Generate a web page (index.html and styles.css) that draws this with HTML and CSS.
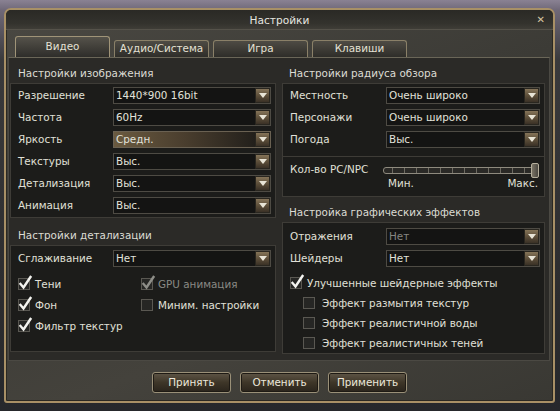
FILE: index.html
```html
<!DOCTYPE html>
<html lang="ru">
<head>
<meta charset="utf-8">
<title>Настройки</title>
<link rel="stylesheet" href="styles.css">
</head>
<body>
<div class="window">
  <div class="titlebar">
    <span></span>
    <span class="title">Настройки</span>
    <span class="close">✕</span>
  </div>
  <div class="tabs">
    <div class="tab active">Видео</div>
    <div class="tab">Аудио/Система</div>
    <div class="tab">Игра</div>
    <div class="tab">Клавиши</div>
  </div>
  <div class="panel">
    <div class="col col-left">
      <div class="head">Настройки изображения</div>
      <div class="box box-img">
        <div class="row"><span class="lbl">Разрешение</span><div class="select"><span class="val">1440*900 16bit</span><span class="arrow"></span></div></div>
        <div class="row"><span class="lbl">Частота</span><div class="select"><span class="val">60Hz</span><span class="arrow"></span></div></div>
        <div class="row"><span class="lbl">Яркость</span><div class="select hot"><span class="val">Средн.</span><span class="arrow"></span></div></div>
        <div class="row"><span class="lbl">Текстуры</span><div class="select"><span class="val">Выс.</span><span class="arrow"></span></div></div>
        <div class="row"><span class="lbl">Детализация</span><div class="select"><span class="val">Выс.</span><span class="arrow"></span></div></div>
        <div class="row"><span class="lbl">Анимация</span><div class="select"><span class="val">Выс.</span><span class="arrow"></span></div></div>
      </div>
      <div class="head head2">Настройки детализации</div>
      <div class="box box-det">
        <div class="row"><span class="lbl">Сглаживание</span><div class="select"><span class="val">Нет</span><span class="arrow"></span></div></div>
        <div class="checks">
          <label class="chk on"><span class="cb"><svg viewBox="0 0 14 14"><rect x="0.5" y="2.5" width="11" height="11"/><path d="M2.5 8 L5.5 11.5 L12.5 1"/></svg></span>Тени</label>
          <label class="chk on disabled"><span class="cb"><svg viewBox="0 0 14 14"><rect x="0.5" y="2.5" width="11" height="11"/><path d="M2.5 8 L5.5 11.5 L12.5 1"/></svg></span>GPU анимация</label>
          <label class="chk on"><span class="cb"><svg viewBox="0 0 14 14"><rect x="0.5" y="2.5" width="11" height="11"/><path d="M2.5 8 L5.5 11.5 L12.5 1"/></svg></span>Фон</label>
          <label class="chk"><span class="cb"><svg viewBox="0 0 14 14"><rect x="0.5" y="2.5" width="11" height="11"/></svg></span>Миним. настройки</label>
          <label class="chk on"><span class="cb"><svg viewBox="0 0 14 14"><rect x="0.5" y="2.5" width="11" height="11"/><path d="M2.5 8 L5.5 11.5 L12.5 1"/></svg></span>Фильтр текстур</label>
        </div>
      </div>
    </div>
    <div class="col col-right">
      <div class="head">Настройки радиуса обзора</div>
      <div class="box box-view">
        <div class="row"><span class="lbl">Местность</span><div class="select"><span class="val">Очень широко</span><span class="arrow"></span></div></div>
        <div class="row"><span class="lbl">Персонажи</span><div class="select"><span class="val">Очень широко</span><span class="arrow"></span></div></div>
        <div class="row"><span class="lbl">Погода</span><div class="select"><span class="val">Выс.</span><span class="arrow"></span></div></div>
        <div class="sep"></div>
        <div class="slider-row">
          <span class="lbl">Кол-во PC/NPC</span>
          <div class="slider">
            <div class="track"><i></i><i></i><i></i><i></i><i></i><i></i><i></i><i></i><i></i><i></i><i></i><i></i><span class="knob"></span></div>
            <div class="ends"><span>Мин.</span><span>Макс.</span></div>
          </div>
        </div>
      </div>
      <div class="head head3">Настройка графических эффектов</div>
      <div class="box box-fx">
        <div class="row"><span class="lbl">Отражения</span><div class="select off"><span class="val">Нет</span><span class="arrow"></span></div></div>
        <div class="row"><span class="lbl">Шейдеры</span><div class="select"><span class="val">Нет</span><span class="arrow"></span></div></div>
        <div class="fx-list">
          <label class="chk on"><span class="cb"><svg viewBox="0 0 14 14"><rect x="0.5" y="2.5" width="11" height="11"/><path d="M2.5 8 L5.5 11.5 L12.5 1"/></svg></span>Улучшенные шейдерные эффекты</label>
          <label class="chk sub"><span class="cb"><svg viewBox="0 0 14 14"><rect x="0.5" y="2.5" width="11" height="11"/></svg></span>Эффект размытия текстур</label>
          <label class="chk sub"><span class="cb"><svg viewBox="0 0 14 14"><rect x="0.5" y="2.5" width="11" height="11"/></svg></span>Эффект реалистичной воды</label>
          <label class="chk sub"><span class="cb"><svg viewBox="0 0 14 14"><rect x="0.5" y="2.5" width="11" height="11"/></svg></span>Эффект реалистичных теней</label>
        </div>
      </div>
    </div>
  </div>
  <div class="buttons">
    <div class="btn">Принять</div>
    <div class="btn">Отменить</div>
    <div class="btn">Применить</div>
  </div>
</div>
</body>
</html>
```
FILE: styles.css
```css
* { box-sizing: border-box; }
html, body { margin: 0; padding: 0; }
body {
  width: 560px;
  height: 411px;
  overflow: hidden;
  font-family: "DejaVu Sans", Verdana, sans-serif;
  font-size: 10.4px;
  color: #dcdcd4;
  background:
    linear-gradient(180deg, #8a8293 0px, #6f6878 10px, #3a3a3c 60px, #2c2c2e 300px, #26282c 100%);
  padding: 8px 0 0 4px;
}
.window {
  width: 551px;
  height: 395px;
  border: 2px solid #a89066;
  border-radius: 7px 7px 3px 3px;
  background: linear-gradient(160deg, #4a4842 0%, #3c3b36 40%, #44423c 70%, #393833 100%);
  display: flex;
  flex-direction: column;
  box-shadow: inset 0 0 0 1px #2a2822;
}
.titlebar {
  height: 20px;
  display: grid;
  grid-template-columns: 40px 1fr 40px;
  align-items: center;
  background: linear-gradient(180deg, #2a2925 0%, #33322d 70%, #3f3d37 100%);
  border-bottom: 1px solid #55524a;
  border-radius: 5px 5px 0 0;
}
.title { text-align: center; color: #e6e6e0; font-size: 10.6px; padding-top: 1px; }
.close { text-align: right; padding-right: 8px; color: #d4c6a4; font-size: 10px; font-weight: bold; }
.tabs {
  display: flex;
  align-items: flex-end;
  gap: 4px;
  padding: 0 0 0 9px;
  height: 27px;
}
.tab {
  width: 95px;
  height: 17px;
  border: 1px solid #8a8068;
  border-bottom: none;
  border-radius: 3px 3px 0 0;
  background: linear-gradient(180deg, #4e4b44 0%, #2e2d29 100%);
  color: #e4e0d4;
  text-align: center;
  line-height: 15px;
}
.tab.active {
  height: 21px;
  line-height: 19px;
  background: linear-gradient(180deg, #55524a 0%, #2e2d2a 100%);
  border-color: #a09478;
}
.panel {
  margin: 0 3px 0 2px;
  height: 304px;
  background: #2b2a27;
  border: 1px solid #4b4943;
  border-top-color: #6a6658;
  display: grid;
  grid-template-columns: 266px 263px;
  column-gap: 6px;
  padding: 0 1px;
}
.col { display: flex; flex-direction: column; }
.head {
  height: 25px;
  padding: 8px 0 0 8px;
  line-height: 14px;
  color: #dcdcd4;
}
.col-right .head { padding-left: 7px; }
.head2 { height: 27px; padding-top: 10px; }
.head3 { height: 25px; padding-top: 8px; }
.box {
  background: #1c1c1a;
  border: 1px solid #3e3c37;
  padding: 0 4px 0 7px;
}
.box-img { height: 135px; padding-top: 0; }
.box-det { height: 107px; padding-top: 1px; }
.box-view { height: 114px; }
.box-fx { flex: 1; margin-bottom: 9px; padding-top: 2px; }
.row {
  height: 22px;
  display: grid;
  grid-template-columns: 95px 1fr;
  align-items: center;
}
.col-right .row { grid-template-columns: 96px 1fr; }
.lbl { color: #e0e0d8; white-space: nowrap; }
.select {
  height: 17px;
  border: 1px solid #4e4b44;
  background: #141413;
  display: flex;
  align-items: center;
  justify-content: space-between;
  padding-left: 2px;
}
.select .val { color: #e2e2da; line-height: 15px; }
.select.hot {
  background: linear-gradient(90deg, #6a5a40 0%, #4a3e2e 45%, #1a1917 100%);
  border-color: #6a6152;
}
.select.off .val { color: #858580; }
.arrow {
  width: 15px;
  height: 15px;
  border: 1px solid #29261f;
  background: linear-gradient(180deg, #857458 0%, #5a4c38 55%, #3a3126 100%);
  display: flex;
  align-items: center;
  justify-content: center;
}
.arrow::after {
  content: "";
  width: 0; height: 0;
  border-left: 4px solid transparent;
  border-right: 4px solid transparent;
  border-top: 5px solid #e8e4d6;
}
.checks {
  display: grid;
  grid-template-columns: 123px 1fr;
  grid-auto-rows: 21px;
  margin-top: 4px;
}
.chk {
  display: flex;
  align-items: center;
  gap: 3px;
  color: #e0e0d8;
  white-space: nowrap;
}
.chk.disabled { color: #8a8a85; }
.cb { width: 14px; height: 14px; display: inline-block; margin-top: -2px; }
.cb svg { width: 14px; height: 14px; display: block; overflow: visible; }
.cb rect { fill: #262624; stroke: #5a5852; stroke-width: 1; }
.cb path { fill: none; stroke: #f4f4f0; stroke-width: 2.4; stroke-linecap: square; }
.chk.disabled .cb path { stroke: #8e8e88; }
.sep { height: 1px; background: #3e3c37; margin: 6px -4px 0 -7px; }
.slider-row {
  display: grid;
  grid-template-columns: 93px 1fr;
  margin-top: 5px;
}
.slider-row .lbl { padding-top: 1px; }
.slider { padding-right: 2px; }
.track {
  height: 7px;
  margin-top: 5px;
  border: 1px solid #8e8a7e;
  border-radius: 3px;
  background: #2a2926;
  position: relative;
  display: flex;
  justify-content: space-between;
  padding: 0 12px 0 8px;
}
.track i { width: 1px; height: 5px; background: #6e6b62; display: block; }
.knob {
  position: absolute;
  right: -2px;
  top: -5px;
  width: 8px;
  height: 15px;
  border: 1px solid #b4ae9c;
  border-radius: 2px;
  background: linear-gradient(90deg, #7a7466, #4a4740);
}
.ends {
  display: flex;
  justify-content: space-between;
  margin-top: 3px;
  padding: 0 0 0 5px;
  color: #e0e0d8;
}
.fx-list {
  display: grid;
  grid-auto-rows: 20px;
  margin-top: 4px;
}
.fx-list .chk.sub { padding-left: 13px; gap: 1px; }
.fx-list .chk.sub .cb { margin-right: 4px; }
.buttons {
  display: flex;
  justify-content: center;
  gap: 9px;
  margin-top: 11px;
}
.btn {
  width: 79px;
  height: 21px;
  border: 1px solid #9a9078;
  border-radius: 3px;
  background: linear-gradient(180deg, #5e5546 0%, #3e3628 50%, #2a241c 100%);
  box-shadow: inset 0 0 0 1px #1e1a14;
  color: #ece8dc;
  text-align: center;
  line-height: 19px;
}
```
